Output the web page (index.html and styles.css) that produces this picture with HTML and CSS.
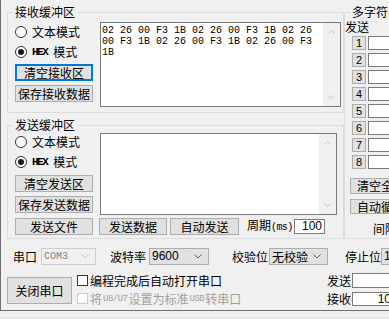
FILE: index.html
```html
<!DOCTYPE html>
<html lang="zh-CN">
<head>
<meta charset="utf-8">
<title>串口调试</title>
<link rel="stylesheet" href="styles.css">
</head>
<body>
<div class="window">
  <div class="top">
    <div class="left-col">
      <fieldset class="group recv">
        <legend>接收缓冲区</legend>
        <div class="recv-body">
          <div class="ctrl-col">
            <div class="radio"><span class="rb"></span>文本模式</div>
            <div class="radio"><span class="rb on"></span><span class="hex">HEX</span>模式</div>
            <div class="btn w78 focus first-btn">清空接收区</div>
            <div class="btn w78 gap4">保存接收数据</div>
          </div>
          <div class="tb recv-tb">
            <div class="txt">02 26 00 F3 1B 02 26 00 F3 1B 02 26
00 F3 1B 02 26 00 F3 1B 02 26 00 F3
1B</div>
            <div class="sb">
              <svg width="7" height="5" viewBox="0 0 7 5"><polyline points="0.5,4.5 3.5,1.5 6.5,4.5" fill="none" stroke="#c2c2c2" stroke-width="1"/></svg>
              <svg width="7" height="5" viewBox="0 0 7 5"><polyline points="0.5,0.5 3.5,3.5 6.5,0.5" fill="none" stroke="#c2c2c2" stroke-width="1"/></svg>
            </div>
          </div>
        </div>
      </fieldset>
      <fieldset class="group send">
        <legend>发送缓冲区</legend>
        <div class="send-body">
          <div class="send-top">
            <div class="ctrl-col">
              <div class="radio"><span class="rb"></span>文本模式</div>
              <div class="radio"><span class="rb on"></span><span class="hex">HEX</span>模式</div>
              <div class="btn w78 gap3">清空发送区</div>
              <div class="btn w78 gap4">保存发送数据</div>
            </div>
            <div class="tb send-tb">
              <div class="txt"></div>
              <div class="sb">
                <svg width="7" height="5" viewBox="0 0 7 5"><polyline points="0.5,4.5 3.5,1.5 6.5,4.5" fill="none" stroke="#c2c2c2" stroke-width="1"/></svg>
                <svg width="7" height="5" viewBox="0 0 7 5"><polyline points="0.5,0.5 3.5,3.5 6.5,0.5" fill="none" stroke="#c2c2c2" stroke-width="1"/></svg>
              </div>
            </div>
          </div>
          <div class="send-row">
            <div class="btn w78">发送文件</div>
            <div class="btn b-senddata">发送数据</div>
            <div class="btn b-auto">自动发送</div>
            <span class="period">周期<span class="ms">(ms)</span></span>
            <span class="edit period-edit">100</span>
          </div>
        </div>
      </fieldset>
    </div>
    <fieldset class="group multi">
      <legend>多字符串发送</legend>
      <div class="multi-body">
        <div class="mhead">发送</div>
        <div class="mrows">
          <div class="mrow"><span class="nbtn">1</span><span class="minput"></span></div>
          <div class="mrow"><span class="nbtn">2</span><span class="minput"></span></div>
          <div class="mrow"><span class="nbtn">3</span><span class="minput"></span></div>
          <div class="mrow"><span class="nbtn">4</span><span class="minput"></span></div>
          <div class="mrow"><span class="nbtn">5</span><span class="minput"></span></div>
          <div class="mrow"><span class="nbtn">6</span><span class="minput"></span></div>
          <div class="mrow"><span class="nbtn">7</span><span class="minput"></span></div>
          <div class="mrow"><span class="nbtn">8</span><span class="minput"></span></div>
        </div>
        <div class="btn mbtn m-clear">清空全部</div>
        <div class="btn mbtn m-auto">自动循环发送</div>
        <div class="interval">间隔</div>
      </div>
    </fieldset>
  </div>

  <div class="port-row">
    <span class="lbl l-port">串口</span>
    <span class="combo disabled c-port"><span class="cval mono">COM3</span><svg width="8" height="5" viewBox="0 0 8 5"><polyline points="0.5,0.5 4,4 7.5,0.5" fill="none" stroke="#c4c4c4" stroke-width="1"/></svg></span>
    <span class="lbl l-baud">波特率</span>
    <span class="combo c-baud"><span class="cval num">9600</span><svg width="8" height="5" viewBox="0 0 8 5"><polyline points="0.5,0.5 4,4 7.5,0.5" fill="none" stroke="#606060" stroke-width="1"/></svg></span>
    <span class="lbl l-parity">校验位</span>
    <span class="combo c-parity"><span class="cval">无校验</span><svg width="8" height="5" viewBox="0 0 8 5"><polyline points="0.5,0.5 4,4 7.5,0.5" fill="none" stroke="#606060" stroke-width="1"/></svg></span>
    <span class="lbl l-stop">停止位</span>
    <span class="combo c-stop"><span class="cval num">1</span></span>
  </div>

  <div class="ctrl-row">
    <div class="btn b-close">关闭串口</div>
    <div class="checks">
      <div class="check"><span class="cb"></span>编程完成后自动打开串口</div>
      <div class="check dis"><span class="cb"></span>将<span class="mono8">U8/U7</span>设置为标准<span class="mono8">USB</span>转串口</div>
    </div>
    <div class="counts">
      <div class="count"><span class="clbl">发送</span><span class="edit cnt-edit"></span></div>
      <div class="count"><span class="clbl">接收</span><span class="edit cnt-edit">10</span></div>
    </div>
  </div>
</div>
<div class="below"></div>
</body>
</html>
```

FILE: styles.css
```css
* { box-sizing: border-box; }
html, body { margin: 0; padding: 0; background: #f0f0f0; }
body {
  width: 389px;
  height: 319px;
  overflow: hidden;
  font-family: "Noto Sans CJK SC", "Microsoft YaHei", sans-serif;
  font-size: 12px;
  line-height: 14px;
  color: #000;
}

.window {
  width: 389px;
  height: 311px;
  border-left: 1px solid #6e6e6e;
  border-bottom: 1px solid #6e6e6e;
  padding: 5px 0 0 6px;
  overflow: hidden;
}

.below {
  margin-top: 6px;
  height: 1px;
  background: #e6e6e6;
}

.top { display: flex; align-items: flex-start; }
.left-col {
  flex: none;
  width: 337px;
  display: flex;
  flex-direction: column;
  gap: 5px;
}

fieldset.group {
  margin: 0;
  padding: 0;
  border: 1px solid #dcdcdc;
  min-width: 0;
}
fieldset.group legend {
  padding: 0 2px;
  margin-left: 5px;
  height: 14px;
  line-height: 14px;
  font-size: 12px;
  white-space: nowrap;
}

/* receive */
.recv-body {
  display: flex;
  gap: 7px;
  padding: 3px 2px 5px 7px;
}
.ctrl-col { width: 78px; flex: none; display: flex; flex-direction: column; }
.radio {
  height: 20px;
  display: flex;
  align-items: center;
  gap: 5px;
  white-space: nowrap;
}
.rb {
  width: 12px;
  height: 12px;
  border: 1px solid #333;
  border-radius: 50%;
  background: #fff;
  flex: none;
  display: flex;
  align-items: center;
  justify-content: center;
}
.rb.on::after {
  content: "";
  width: 6px;
  height: 6px;
  border-radius: 50%;
  background: #1a1a1a;
}
.hex {
  font-family: "Liberation Mono", monospace;
  font-size: 11px;
  letter-spacing: -1.5px;
  font-weight: bold;
  margin-right: 1px;
}

.btn {
  height: 17px;
  border: 1px solid #adadad;
  background: #e1e1e1;
  text-align: center;
  line-height: 15px;
  white-space: nowrap;
  overflow: hidden;
  flex: none;
}
.w78 { width: 78px; }
.btn.focus { border: 2px solid #0078d7; line-height: 13px; }
.first-btn { margin-top: 2px; }
.gap3 { margin-top: 3px; }
.gap4 { margin-top: 4px; }

.tb {
  border: 1px solid #7a7a7a;
  background: #fff;
  display: flex;
  flex: none;
}
.recv-tb { width: 241px; height: 85px; }
.txt {
  flex: 1;
  padding: 2px 0 0 1px;
  font-family: "Liberation Mono", monospace;
  font-size: 10px;
  line-height: 11px;
  white-space: pre;
  overflow: hidden;
}
.sb {
  width: 17px;
  flex: none;
  background: #f0f0f0;
  display: flex;
  flex-direction: column;
  justify-content: space-between;
  align-items: center;
  padding: 6px 0;
}
.sb svg { display: block; }

/* send */
.send-body { padding: 0 6px 3px 7px; }
.send-top { display: flex; gap: 7px; align-items: flex-start; }
.send-tb { width: 237px; height: 82px; margin-top: 1px; }
.send-row {
  margin-top: 3px;
  display: flex;
  align-items: center;
}
.b-senddata { width: 68px; margin-left: 6px; }
.b-auto { width: 69px; margin-left: 3px; }
.period { margin-left: 8px; width: 47px; white-space: nowrap; }
.ms { font-family: "Liberation Mono", monospace; font-size: 10px; letter-spacing: -0.6px; }
.edit {
  border: 1px solid #7a7a7a;
  background: #fff;
  display: block;
  font-family: "Liberation Sans", Arial, sans-serif;
  font-size: 12px;
  text-align: right;
}
.period-edit { width: 31px; height: 15px; line-height: 13px; padding-right: 2px; }

/* multi */
.multi {
  flex: none;
  width: 60px;
  height: 234px;
  margin-left: 4px;
}
.multi legend { margin-left: 4px; }
.multi-body { display: flex; flex-direction: column; }
.mhead { height: 14px; line-height: 14px; margin-top: 1px; white-space: nowrap; }
.mrows { margin-top: 2px; display: flex; flex-direction: column; gap: 3px; }
.mrow { display: flex; gap: 2px; padding-left: 7px; height: 14px; }
.nbtn {
  width: 14px;
  height: 14px;
  border: 1px solid #adadad;
  background: #e1e1e1;
  font-family: "Liberation Sans", Arial, sans-serif;
  font-size: 11px;
  line-height: 12px;
  text-align: center;
  flex: none;
}
.minput {
  width: 40px;
  height: 14px;
  border: 1px solid #7a7a7a;
  background: #fff;
  flex: none;
}
.mbtn { width: 60px; margin-left: 5px; text-align: left; padding-left: 6px; }
.m-clear { margin-top: 9px; height: 16px; line-height: 14px; }
.m-auto { margin-top: 5px; height: 15px; line-height: 13px; }
.interval { margin-top: 8px; padding-left: 28px; white-space: nowrap; }

/* port row */
.port-row {
  margin-top: 9px;
  height: 17px;
  display: flex;
  align-items: center;
  white-space: nowrap;
}
.lbl { flex: none; }
.l-port { margin-left: 6px; width: 24px; }
.l-baud { margin-left: 14px; width: 36px; }
.l-parity { margin-left: 23px; width: 36px; }
.l-stop { margin-left: 17px; width: 36px; }
.combo {
  flex: none;
  height: 17px;
  border: 1px solid #adadad;
  background: #e1e1e1;
  display: flex;
  align-items: center;
  justify-content: space-between;
  padding: 0 6px 0 2px;
}
.combo svg { display: block; }
.combo.disabled { border-color: #cccccc; background: #f0f0f0; color: #838383; }
.c-port { width: 55px; margin-left: 4px; }
.c-baud { width: 60px; margin-left: 3px; }
.c-parity { width: 59px; margin-left: 1px; }
.c-stop { width: 40px; }
.cval { line-height: 15px; }
.mono { font-family: "Liberation Mono", monospace; font-size: 10px; }
.num { font-family: "Liberation Sans", Arial, sans-serif; font-size: 12px; }

/* bottom controls */
.ctrl-row {
  margin-top: 8px;
  display: flex;
  align-items: flex-start;
}
.b-close {
  width: 65px;
  height: 27px;
  line-height: 25px;
  margin-top: 4px;
}
.checks { width: 250px; margin-left: 5px; flex: none; }
.check {
  height: 15px;
  display: flex;
  align-items: center;
  gap: 1px;
  white-space: nowrap;
}
.check + .check { margin-top: 3px; }
.cb {
  width: 11px;
  height: 11px;
  border: 1px solid #333;
  background: #fff;
  flex: none;
  margin-right: 1px;
}
.check.dis { color: #a0a0a0; }
.check.dis .cb { border-color: #cccccc; }
.mono8 { font-family: "Liberation Mono", monospace; font-size: 9px; letter-spacing: -0.5px; }

.counts { flex: none; }
.count { display: flex; align-items: center; height: 15px; }
.count + .count { margin-top: 3px; }
.clbl { width: 25px; flex: none; }
.cnt-edit { width: 42px; height: 14px; line-height: 12px; padding-right: 2px; }
.count:first-child .cnt-edit { height: 15px; }
```
